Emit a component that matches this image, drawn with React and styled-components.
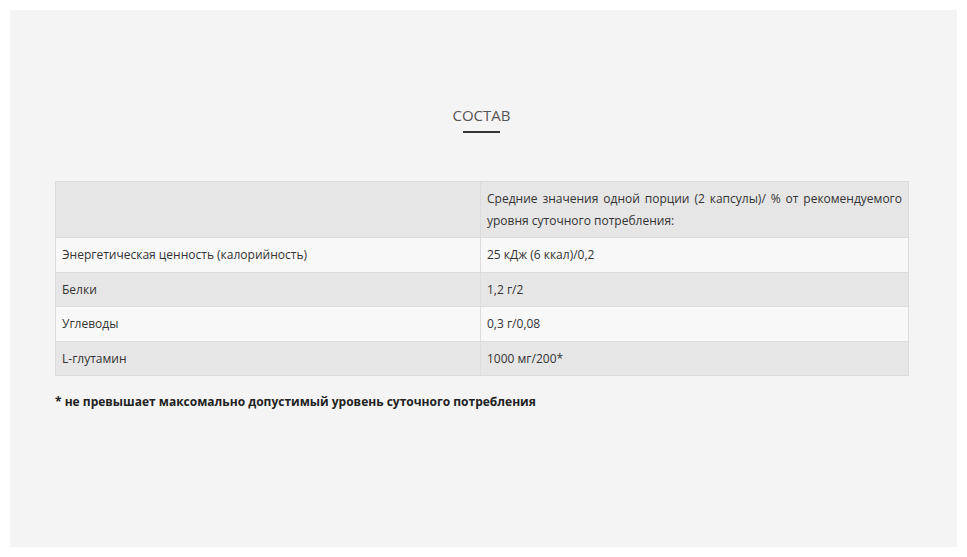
import React from 'react';
import styled, { createGlobalStyle } from 'styled-components';

const GlobalStyle = createGlobalStyle`
  html, body {
    margin: 0;
    padding: 0;
    background: #fff;
  }
  body {
    font-family: "Open Sans", "Liberation Sans", sans-serif;
  }
`;

const Page = styled.div`
  padding: 10px 10px 10px 10px;
  width: 967px;
  box-sizing: border-box;
`;

const Panel = styled.section`
  background: #f4f4f4;
  width: 947px;
  height: 537px;
  box-sizing: border-box;
  padding: 94px 49px 0 45px;
`;

const Heading = styled.h2`
  margin: 0;
  text-align: center;
  font-weight: 400;
  font-size: 15px;
  line-height: 22px;
  color: #555;
  text-transform: uppercase;
`;

const Underline = styled.div`
  width: 37px;
  height: 2px;
  background: #333;
  margin: 5px auto 0;
`;

const Table = styled.table`
  margin-top: 48px;
  width: 854px;
  border-collapse: collapse;
  font-size: 12px;
  color: #333;
  border: 1px solid #dcdcdc;
`;

const Row = styled.tr`
  background: ${p => (p.$light ? '#f8f8f8' : '#e6e6e6')};
`;

const Cell = styled.td`
  border: 1px solid #dcdcdc;
  padding: 6px 6px 6px 6px;
  line-height: 21.5px;
  vertical-align: top;
  text-align: ${p => (p.$justify ? 'justify' : 'left')};
  width: ${p => p.$w || 'auto'};
`;

const Note = styled.p`
  margin: 17px 0 0 0;
  font-size: 12px;
  font-weight: 700;
  color: #222;
  line-height: 18px;
`;

const rows = [
  ['Энергетическая ценность (калорийность)', '25 кДж (6 ккал)/0,2'],
  ['Белки', '1,2 г/2'],
  ['Углеводы', '0,3 г/0,08'],
  ['L-глутамин', '1000 мг/200*'],
];

export default function App() {
  return (
    <Page>
      <GlobalStyle />
      <Panel>
        <Heading>Состав</Heading>
        <Underline />
        <Table>
          <tbody>
            <Row>
              <Cell $w="412px"></Cell>
              <Cell $justify>
                Средние значения одной порции (2 капсулы)/ % от рекомендуемого уровня суточного потребления:
              </Cell>
            </Row>
            {rows.map((r, i) => (
              <Row key={i} $light={i % 2 === 0}>
                <Cell>{r[0]}</Cell>
                <Cell>{r[1]}</Cell>
              </Row>
            ))}
          </tbody>
        </Table>
        <Note>* не превышает максомально допустимый уровень суточного потребления</Note>
      </Panel>
    </Page>
  );
}
